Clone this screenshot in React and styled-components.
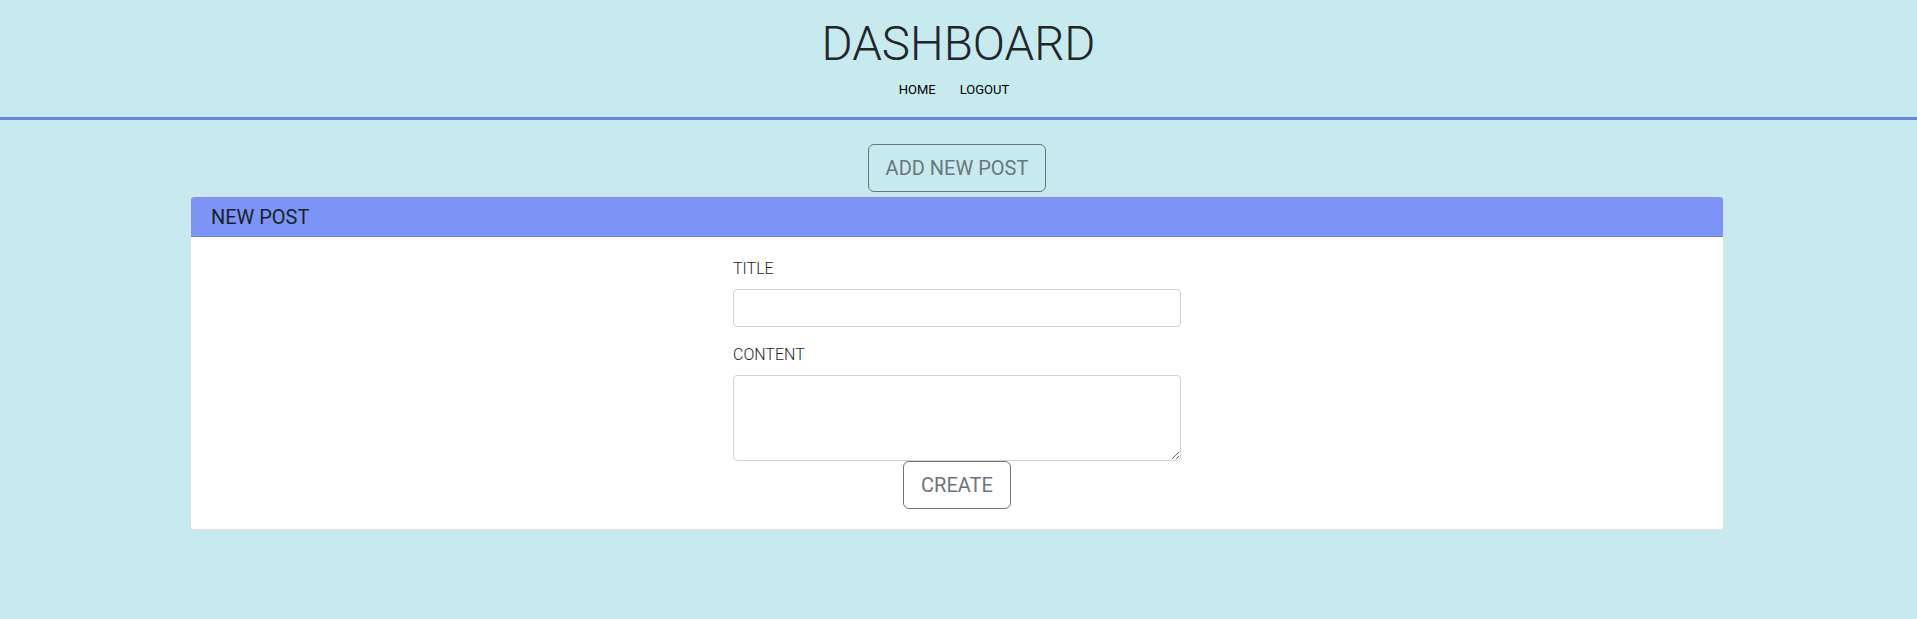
import React from "react";
import styled, { createGlobalStyle } from "styled-components";

const GlobalStyle = createGlobalStyle`
  html, body {
    margin: 0;
    padding: 0;
    background: #c7eaee;
    font-family: Roboto, "Liberation Sans", Arial, sans-serif;
    color: #212529;
  }
  *, *::before, *::after { box-sizing: border-box; }
`;

const Header = styled.header`
  display: flex;
  flex-direction: column;
  align-items: center;
  padding: 15px 0 17px;
  border-bottom: 3px solid #6a84d6;
`;

const Title = styled.h1`
  margin: 0;
  font-size: 47.5px;
  line-height: 59px;
  font-weight: 300;
  color: #212529;
`;

const Nav = styled.nav`
  display: flex;
  gap: 24px;
  margin-top: 6px;
  padding-right: 9px;
`;

const NavLink = styled.a`
  font-size: 13px;
  line-height: 20px;
  color: #000;
  text-decoration: none;
  cursor: pointer;
`;

const Main = styled.main`
  display: flex;
  flex-direction: column;
  align-items: center;
  padding: 24px 3px 0 0;
`;

const OutlineButton = styled.button`
  font-family: Roboto, "Liberation Sans", Arial, sans-serif;
  font-size: 20px;
  line-height: 30px;
  font-weight: 400;
  color: #6c757d;
  background: transparent;
  border: 1px solid #6c757d;
  border-radius: 6px;
  padding: 8px 17px;
  cursor: pointer;
  margin-bottom: ${(p) => p.$mb || 0}px;
`;

const Card = styled.section`
  width: calc(80% + 3px);
  background: #fff;
  border: 1px solid rgba(0, 0, 0, 0.125);
  border-radius: 4px;
  overflow: hidden;
`;

const CardHeader = styled.div`
  background: #7b94f5;
  border-bottom: 1px solid #6d82dc;
  padding: 8px 20px 7px;
  font-size: 20px;
  line-height: 24px;
  font-weight: 400;
  color: #1d1f2b;
`;

const CardBody = styled.div`
  padding: 20px;
  display: flex;
  justify-content: center;
`;

const Form = styled.form`
  width: 448px;
  display: flex;
  flex-direction: column;
`;

const Group = styled.div`
  display: flex;
  flex-direction: column;
  margin-bottom: ${(p) => p.$mb || 0}px;
`;

const Label = styled.label`
  font-size: 16px;
  line-height: 24px;
  font-weight: 300;
  color: #212529;
  margin-bottom: 8px;
`;

const Input = styled.input`
  height: 38px;
  width: 100%;
  border: 1px solid #ced4da;
  border-radius: 4px;
  padding: 6px 12px;
  font-size: 16px;
  font-family: Roboto, "Liberation Sans", Arial, sans-serif;
  background: #fff;
  outline: none;
`;

const TextArea = styled.textarea`
  height: 86px;
  width: 100%;
  border: 1px solid #ced4da;
  border-radius: 4px;
  padding: 6px 12px;
  font-size: 16px;
  line-height: 24px;
  font-family: Roboto, "Liberation Sans", Arial, sans-serif;
  background: #fff;
  outline: none;
  display: block;
  resize: vertical;
`;

const Actions = styled.div`
  display: flex;
  justify-content: center;
`;

export default function App() {
  return (
    <>
      <GlobalStyle />
      <Header>
        <Title>DASHBOARD</Title>
        <Nav>
          <NavLink>HOME</NavLink>
          <NavLink>LOGOUT</NavLink>
        </Nav>
      </Header>
      <Main>
        <OutlineButton $mb={4}>ADD NEW POST</OutlineButton>
        <Card>
          <CardHeader>NEW POST</CardHeader>
          <CardBody>
            <Form onSubmit={(e) => e.preventDefault()}>
              <Group $mb={16}>
                <Label htmlFor="title">TITLE</Label>
                <Input id="title" type="text" />
              </Group>
              <Group>
                <Label htmlFor="content">CONTENT</Label>
                <TextArea id="content" rows={3} />
              </Group>
              <Actions>
                <OutlineButton type="submit">CREATE</OutlineButton>
              </Actions>
            </Form>
          </CardBody>
        </Card>
      </Main>
    </>
  );
}
